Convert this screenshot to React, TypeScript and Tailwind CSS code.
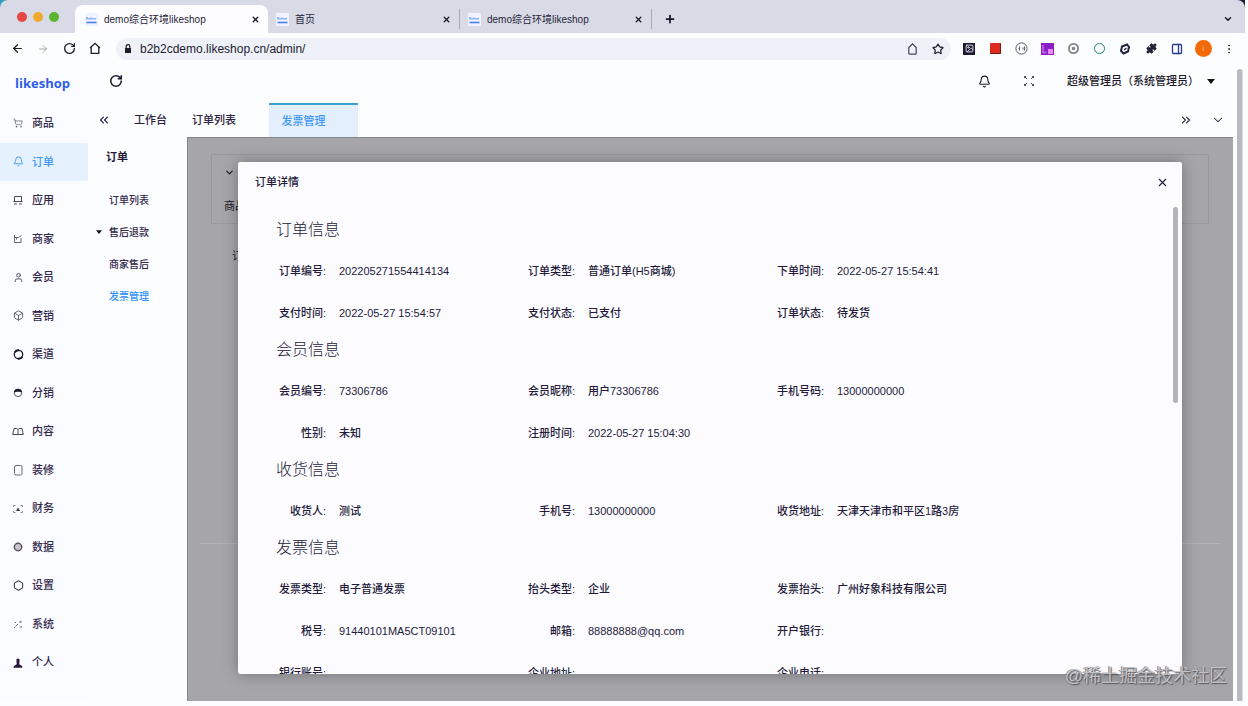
import type { ReactNode } from "react";
import {
  ArrowLeft,
  ArrowRight,
  Bell,
  Box,
  ChevronDown,
  ChevronsLeft,
  ChevronsRight,
  Disc,
  EllipsisVertical,
  Hexagon,
  Image as ImageIcon,
  PanelRight,
  Plus,
  Puzzle,
  RotateCw,
  ShoppingCart,
  Star,
  User,
  X,
} from "lucide-react";

const tabs = [
  { title: "demo综合环境likeshop", active: true },
  { title: "首页", active: false },
  { title: "demo综合环境likeshop", active: false },
];

const menu: { label: string; icon: ReactNode }[] = [
  { label: "商品", icon: <ShoppingCart size={10} strokeWidth={1.5} /> },
  { label: "订单", icon: <Bell size={11} strokeWidth={2} /> },
  { label: "应用", icon: <Screen /> },
  { label: "商家", icon: <Shop /> },
  { label: "会员", icon: <User size={11} strokeWidth={2} /> },
  { label: "营销", icon: <Box size={11} strokeWidth={1.8} /> },
  { label: "渠道", icon: <Ring /> },
  { label: "分销", icon: <HalfRing /> },
  { label: "内容", icon: <Book /> },
  { label: "装修", icon: <Sheet /> },
  { label: "财务", icon: <Money /> },
  { label: "数据", icon: <Gauge /> },
  { label: "设置", icon: <Hexagon size={11} strokeWidth={2.5} /> },
  { label: "系统", icon: <Nodes /> },
  { label: "个人", icon: <Person /> },
];

const sections = [
  {
    title: "订单信息",
    fields: [
      ["订单编号", "202205271554414134"],
      ["订单类型", "普通订单(H5商城)"],
      ["下单时间", "2022-05-27 15:54:41"],
      ["支付时间", "2022-05-27 15:54:57"],
      ["支付状态", "已支付"],
      ["订单状态", "待发货"],
    ],
  },
  {
    title: "会员信息",
    fields: [
      ["会员编号", "73306786"],
      ["会员昵称", "用户73306786"],
      ["手机号码", "13000000000"],
      ["性别", "未知"],
      ["注册时间", "2022-05-27 15:04:30"],
    ],
  },
  {
    title: "收货信息",
    fields: [
      ["收货人", "测试"],
      ["手机号", "13000000000"],
      ["收货地址", "天津天津市和平区1路3房"],
    ],
  },
  {
    title: "发票信息",
    fields: [
      ["发票类型", "电子普通发票"],
      ["抬头类型", "企业"],
      ["发票抬头", "广州好象科技有限公司"],
      ["税号", "91440101MA5CT09101"],
      ["邮箱", "88888888@qq.com"],
      ["开户银行", ""],
      ["银行账号", ""],
      ["企业地址", ""],
      ["企业电话", ""],
    ],
  },
];

function Screen() {
  return (
    <svg width="10" height="10" viewBox="0 0 10 10" fill="none" stroke="#4a4658">
      <path d="M1.500 6V1.500h7V6M.5 6.500h9M1 9h3M6 9h3" />
    </svg>
  );
}

function Shop() {
  return (
    <svg width="10" height="10" viewBox="0 0 10 10" fill="none" stroke="#6a6678">
      <path d="M1.500 1v7.500h6.500V4M1.500 3.500h4L8.500 1.500M3.500 3.500v2" />
    </svg>
  );
}

function Book() {
  return (
    <svg width="12" height="9" viewBox="0 0 12 9" fill="none" stroke="#4a4658">
      <path d="M2 1.500h3l1 1 1-1h3L11.300 7.500H.7zM6 2.500v5" />
    </svg>
  );
}

function Sheet() {
  return (
    <svg width="10" height="11" viewBox="0 0 10 11" fill="none" stroke="#6a6678">
      <rect x="1.500" y=".5" width="7.500" height="9.500" rx="1.500" />
    </svg>
  );
}

function Money() {
  return (
    <svg width="10" height="10" viewBox="0 0 10 10" fill="none" stroke="#8a8696">
      <path d="M.5 3V1.500h2M7.500 1.500h2V3M.5 7v1.500h2M7.500 8.500h2V7" />
      <path d="M5 3.500L7 7H3z" fill="#3a3648" stroke="none" />
    </svg>
  );
}

function Gauge() {
  return (
    <svg width="10" height="10" viewBox="0 0 10 10" fill="#c9c4d0">
      <circle cx="5" cy="5" r="3.700" stroke="#55505f" strokeWidth="1.400" />
    </svg>
  );
}

function Nodes() {
  return (
    <svg width="10" height="9" viewBox="0 0 10 9" fill="none" stroke="#77738a">
      <path d="M1.500 2.500h1.500M2.500 6.500L5 4M6 2.500L8 1v2M6.500 7h2.500M1 7.500h1" />
    </svg>
  );
}

function Ring() {
  return (
    <svg width="11" height="11" viewBox="0 0 11 11" fill="none" stroke="#1d1830">
      <circle cx="5.500" cy="5.500" r="4.200" strokeWidth="1.300" />
      <path d="M1.800 3.200A4.200 4.200 0 0 1 6 1.300M9.200 7.800A4.200 4.200 0 0 1 5 9.700" strokeWidth="2" />
    </svg>
  );
}

function HalfRing() {
  return (
    <svg width="10" height="10" viewBox="0 0 10 10" fill="none">
      <ellipse cx="5" cy="5" rx="3.800" ry="3.600" stroke="#5d586c" />
      <path d="M1 4.600a4 3.800 0 0 1 8 0c-2-1.200-6-1.200-8 0z" fill="#1d1830" />
    </svg>
  );
}

function Person() {
  return (
    <svg width="10" height="10" viewBox="0 0 10 10" fill="#2c1440">
      <path d="M3.400 1.600Q5-.6 6.600 1.600L6.300 6.200 9.300 8.200V9.800H.7V8.200L3.700 6.200z" />
    </svg>
  );
}

function Caret({ small = false }: { small?: boolean }) {
  return (
    <svg width={small ? 6 : 8} height={small ? 4 : 5} viewBox="0 0 8 5" fill="#14121c">
      <path d="M0 0h8L4 5z" />
    </svg>
  );
}

function Favicon() {
  return (
    <svg width="13" height="13" viewBox="0 0 13 13" className="shrink-0">
      <rect width="13" height="13" rx="1" fill="#eef3ff" />
      <path d="M1.500 9.500h10" stroke="#4c7fe8" strokeWidth="1.600" />
      <path d="M2 6.500V4M4 6.500V5M6 6.500V4.500M8 6.500V5M10 6.500V5" stroke="#6d97ee" strokeWidth="1.400" />
    </svg>
  );
}

function BrowserTabs() {
  return (
    <div className="mr-[3px] bg-linear-to-r from-[#2f9fbd] to-[#1b1b33]">
      <div className="flex h-[33px] items-end rounded-t-lg bg-[#d8dbe5]">
        <div className="flex h-full w-[75px] shrink-0 items-center gap-1.5 pl-[17px]">
          <span className="size-2.5 rounded-full bg-[#e5463f]" />
          <span className="size-2.5 rounded-full bg-[#f0a92c]" />
          <span className="size-2.5 rounded-full bg-[#5ab42c]" />
        </div>
        {tabs.map((tab, i) => (
          <div
            key={i}
            className={
              tab.active
                ? "flex h-7 w-[193px] items-center rounded-t-lg bg-[#fdfdff] pr-2 pl-2.5"
                : "my-1 flex h-5 w-48 items-center border-r border-[#a6a8b4] pr-2 pl-2"
            }
          >
            <Favicon />
            <span className="ml-1.5 flex-1 truncate text-[10px] text-[#26233a]">{tab.title}</span>
            <button aria-label="关闭标签页" className="text-[#1b1828]">
              <X size={9} strokeWidth={3.5} />
            </button>
          </div>
        ))}
        <button aria-label="新标签页" className="ml-3 flex h-7 items-center text-[#15132a]">
          <Plus size={12} strokeWidth={3.5} />
        </button>
        <button aria-label="搜索标签页" className="mr-3 ml-auto flex h-7 items-center text-[#15132a]">
          <ChevronDown size={10} strokeWidth={3.5} />
        </button>
      </div>
    </div>
  );
}

function Cell({ children }: { children: ReactNode }) {
  return <button className="flex w-[26px] shrink-0 items-center justify-center">{children}</button>;
}

function AddressBar() {
  return (
    <div className="flex h-[31px] items-center pl-1 text-[#1f1c2c]">
      <Cell>
        <ArrowLeft size={13} strokeWidth={2.2} />
      </Cell>
      <Cell>
        <ArrowRight size={12} strokeWidth={1.5} className="text-[#8b8b96]" />
      </Cell>
      <Cell>
        <RotateCw size={13} strokeWidth={2.4} />
      </Cell>
      <Cell>
        <svg width="12" height="13" viewBox="0 0 12 13" fill="none" stroke="#1f1c2c" strokeWidth="1.300">
          <path d="M1 6L6 1.300 11 6M2.200 5V11.300H9.800V5" />
        </svg>
      </Cell>
      <div className="ml-2 flex h-[22px] flex-1 items-center rounded-full bg-[#eef1f7] pl-2">
        <svg width="8" height="9" viewBox="0 0 8 9" fill="#1f1c2c">
          <path d="M1 4h6v5H1z" />
          <path d="M2.200 4V2.500a1.800 1.800 0 0 1 3.600 0V4" fill="none" stroke="#1f1c2c" strokeWidth="1.200" />
        </svg>
        <input
          aria-label="地址"
          defaultValue="b2b2cdemo.likeshop.cn/admin/"
          className="ml-2 min-w-0 flex-1 bg-transparent text-xs text-[#232033] outline-none"
        />
        <Cell>
          <svg width="11" height="12" viewBox="0 0 11 12" fill="none" stroke="#44415a" strokeWidth="1.200">
            <path d="M5.500.8L9.200 4.500V10.200q0 1-1 1H2.800q-1 0-1-1V4.500z" />
          </svg>
        </Cell>
        <Cell>
          <Star size={12} strokeWidth={2.4} />
        </Cell>
      </div>
      <div className="ml-[5px] flex items-center">
        <Cell>
          <span className="flex size-3 items-center justify-center bg-[#1c1930] text-[#dcdce6]">
            <ImageIcon size={9} strokeWidth={2.5} />
          </span>
        </Cell>
        <Cell>
          <span className="size-[11px] rounded-[1px] border-r border-b border-[#7a1712] bg-[#dd2a1e]" />
        </Cell>
        <Cell>
          <svg width="13" height="13" viewBox="0 0 13 13" fill="none" stroke="#5b5868">
            <circle cx="6.500" cy="6.500" r="5.600" />
            <path d="M4.500 4.500v4M3.500 6.500h1M9.500 4.500v4M8 5.500v2" />
          </svg>
        </Cell>
        <Cell>
          <svg width="13" height="12" viewBox="0 0 13 12">
            <rect width="13" height="12" fill="#8a1fc8" />
            <path d="M2 2v7.500h3.500" fill="none" stroke="#c66cf0" strokeWidth="1.500" />
            <path d="M7 6h5v5H7z" fill="#e68cf4" />
          </svg>
        </Cell>
        <Cell>
          <Disc size={11} strokeWidth={4} className="text-[#85818b]" />
        </Cell>
        <Cell>
          <span className="size-[11px] rounded-full border-[1.5px] border-[#1a8a62]" />
        </Cell>
        <Cell>
          <svg width="12" height="12" viewBox="0 0 12 12" fill="none" stroke="#25213c" strokeWidth="2">
            <path d="M3 3.500L8 1.500 10 4 9 8.500 4.500 10.500 2 8z" />
            <path d="M5 7l2.500-2" strokeWidth="1.200" />
          </svg>
        </Cell>
        <Cell>
          <Puzzle size={11} strokeWidth={2} fill="#25213c" />
        </Cell>
        <Cell>
          <PanelRight size={12} strokeWidth={2.6} className="text-[#243a8c]" />
        </Cell>
        <Cell>
          <span className="flex size-[17px] items-center justify-center rounded-full bg-[#f26a08] text-[8px] text-[#ffb066]">
            I
          </span>
        </Cell>
        <Cell>
          <EllipsisVertical size={12} strokeWidth={1.8} />
        </Cell>
        <span className="w-1.5" />
      </div>
    </div>
  );
}

function Sidebar() {
  return (
    <aside className="flex w-[88px] shrink-0 flex-col bg-[#fafcff] pb-[19px]">
      <a href="#home" className="flex h-10 items-center pl-[15px] font-['Open_Sans'] text-[13px] font-bold text-[#2f5fe6]">
        likeshop
      </a>
      <nav className="flex min-h-0 flex-1 flex-col">
        {menu.map((item, i) => (
          <a
            key={item.label}
            href={"#menu-" + i}
            className={
              i === 1
                ? "flex flex-1 items-center bg-[#e6f1fe] text-[11px] font-medium text-[#3d97f5]"
                : "flex flex-1 items-center text-[11px] font-medium text-[#33294a]"
            }
          >
            <span className={i === 1 ? "flex w-8 justify-center pl-1" : "flex w-8 justify-center pl-1 text-[#4a4658]"}>
              {item.icon}
            </span>
            {item.label}
          </a>
        ))}
      </nav>
    </aside>
  );
}

function SubMenu() {
  return (
    <nav className="w-[99px] shrink-0 pt-1 text-[10px] font-medium text-[#33294a]">
      <h2 className="flex h-8 items-center pl-[18px] text-[11px] font-bold text-[#221833]">订单</h2>
      <ul className="pt-[11px]">
        <li>
          <a href="#orders" className="flex h-8 items-center pl-[21px]">
            订单列表
          </a>
        </li>
        <li>
          <button className="flex h-8 items-center gap-[7px] pl-2">
            <Caret small />
            售后退款
          </button>
        </li>
        <li>
          <a href="#aftersale" className="flex h-8 items-center pl-[21px]">
            商家售后
          </a>
        </li>
        <li>
          <a href="#invoice" className="flex h-8 items-center pl-[21px] font-medium text-[#2f92f5]">
            发票管理
          </a>
        </li>
      </ul>
    </nav>
  );
}

function AppHeader() {
  return (
    <header className="flex h-[39px] items-center pr-[22px] pb-[5px] pl-[21px] text-[#1d1a2b]">
      <button aria-label="刷新">
        <RotateCw size={14} strokeWidth={2.6} />
      </button>
      <button aria-label="通知" className="ml-auto">
        <Bell size={13} strokeWidth={2} />
      </button>
      <button aria-label="全屏" className="ml-8">
        <svg width="12" height="12" viewBox="0 0 12 12" fill="none" stroke="#4a4658">
          <path d="M1.500 1.500l2.500 2.500M10.500 1.500L8 4M1.500 10.500L4 8M10.500 10.500L8 8M1.500 3V1.500H3M9 1.500h1.500V3M1.500 9v1.500H3M9 10.500h1.500V9" />
        </svg>
      </button>
      <button className="ml-8 flex items-center gap-2 text-[11px] font-medium">
        超级管理员（系统管理员）
        <Caret />
      </button>
    </header>
  );
}

function PageTabs() {
  return (
    <div className="flex h-[34px] items-stretch pr-3 pl-[9px] text-[11px] font-medium text-[#2a2040]">
      <button aria-label="向左" className="mr-[23px]">
        <ChevronsLeft size={14} strokeWidth={2} />
      </button>
      <button className="mr-[25px]">工作台</button>
      <button className="mr-[33px]">订单列表</button>
      <button className="w-[89px] border-t-2 border-[#3f9fd2] bg-[#e3effc] pr-5 text-[#3d97f5]">发票管理</button>
      <button aria-label="向右" className="ml-auto">
        <ChevronsRight size={14} strokeWidth={2} />
      </button>
      <button aria-label="更多" className="ml-[18px]">
        <ChevronDown size={14} strokeWidth={1.8} />
      </button>
    </div>
  );
}

function OrderDialog() {
  return (
    <div
      role="dialog"
      aria-label="订单详情"
      className="flex min-h-0 flex-1 flex-col rounded-xs bg-[#fcfcff] text-[#241a3a] shadow-[0_0_16px_rgba(0,0,0,0.3)]"
    >
      <div className="flex h-10 shrink-0 items-center justify-between pr-[13px] pl-[17px]">
        <h1 className="text-[11px] font-medium">订单详情</h1>
        <button aria-label="关闭">
          <X size={13} strokeWidth={2} />
        </button>
      </div>
      <div className="flex min-h-0 flex-1">
        <div className="min-w-0 flex-1 overflow-hidden pt-4 pl-[38px]">
          {sections.map((section) => (
            <section key={section.title} className="mb-1">
              <h2 className="mb-2 h-6 text-base leading-6 font-light">{section.title}</h2>
              <dl className="grid max-w-[747px] grid-cols-3 text-[11px] font-medium">
                {section.fields.map(([label, value]) => (
                  <div key={label} className="flex h-[42px] items-center">
                    <dt className="w-[50px] text-right">{label}:</dt>
                    <dd className="pl-[13px] whitespace-nowrap">{value}</dd>
                  </div>
                ))}
              </dl>
            </section>
          ))}
        </div>
        <div className="mx-1 mt-[5px] h-[196px] w-[5px] shrink-0 rounded-full bg-[#b4b4ba]" />
      </div>
    </div>
  );
}

function Workspace() {
  return (
    <main className="relative mr-1 flex-1 border-t border-l border-[#858589] bg-[#a5a5aa] px-3 pt-4">
      <div className="mr-3 ml-[11px] h-[70px] border border-[#98989d] px-3 pt-3 text-[11px] text-[#1c1a22]">
        <ChevronDown size={11} strokeWidth={2.5} />
        <p className="mt-5">商品</p>
      </div>
      <div className="mt-5 h-[300px] border-b border-[#b4b4b8] px-8 pt-1 text-[11px] text-[#1c1a22]">
        <p>订单</p>
      </div>
      <div className="absolute inset-0 flex pt-6 pr-[51px] pb-[27px] pl-[50px]">
        <OrderDialog />
      </div>
    </main>
  );
}

export default function App() {
  return (
    <div className="relative flex h-screen flex-col overflow-hidden bg-[#fcfdff] pb-[5px] font-['Liberation_Sans','Noto_Sans_CJK_SC',sans-serif]">
      <BrowserTabs />
      <AddressBar />
      <div className="flex min-h-0 flex-1">
        <Sidebar />
        <div className="flex min-w-0 flex-1 flex-col pr-[11px]">
          <AppHeader />
          <PageTabs />
          <div className="flex min-h-0 flex-1">
            <SubMenu />
            <Workspace />
          </div>
        </div>
        <div className="mt-[5px] mr-[5px] -ml-[11px] w-1.5 shrink-0 rounded-t-full border-r border-[#dcdce4] bg-[#b9b9c1]" />
      </div>
      <div className="absolute right-[21px] bottom-4 text-lg leading-7 text-[#d4d4d9]/80 [text-shadow:1px_1px_1px_#55555c,-1px_0_0_#8a8a90]">
        @稀土掘金技术社区
      </div>
    </div>
  );
}
